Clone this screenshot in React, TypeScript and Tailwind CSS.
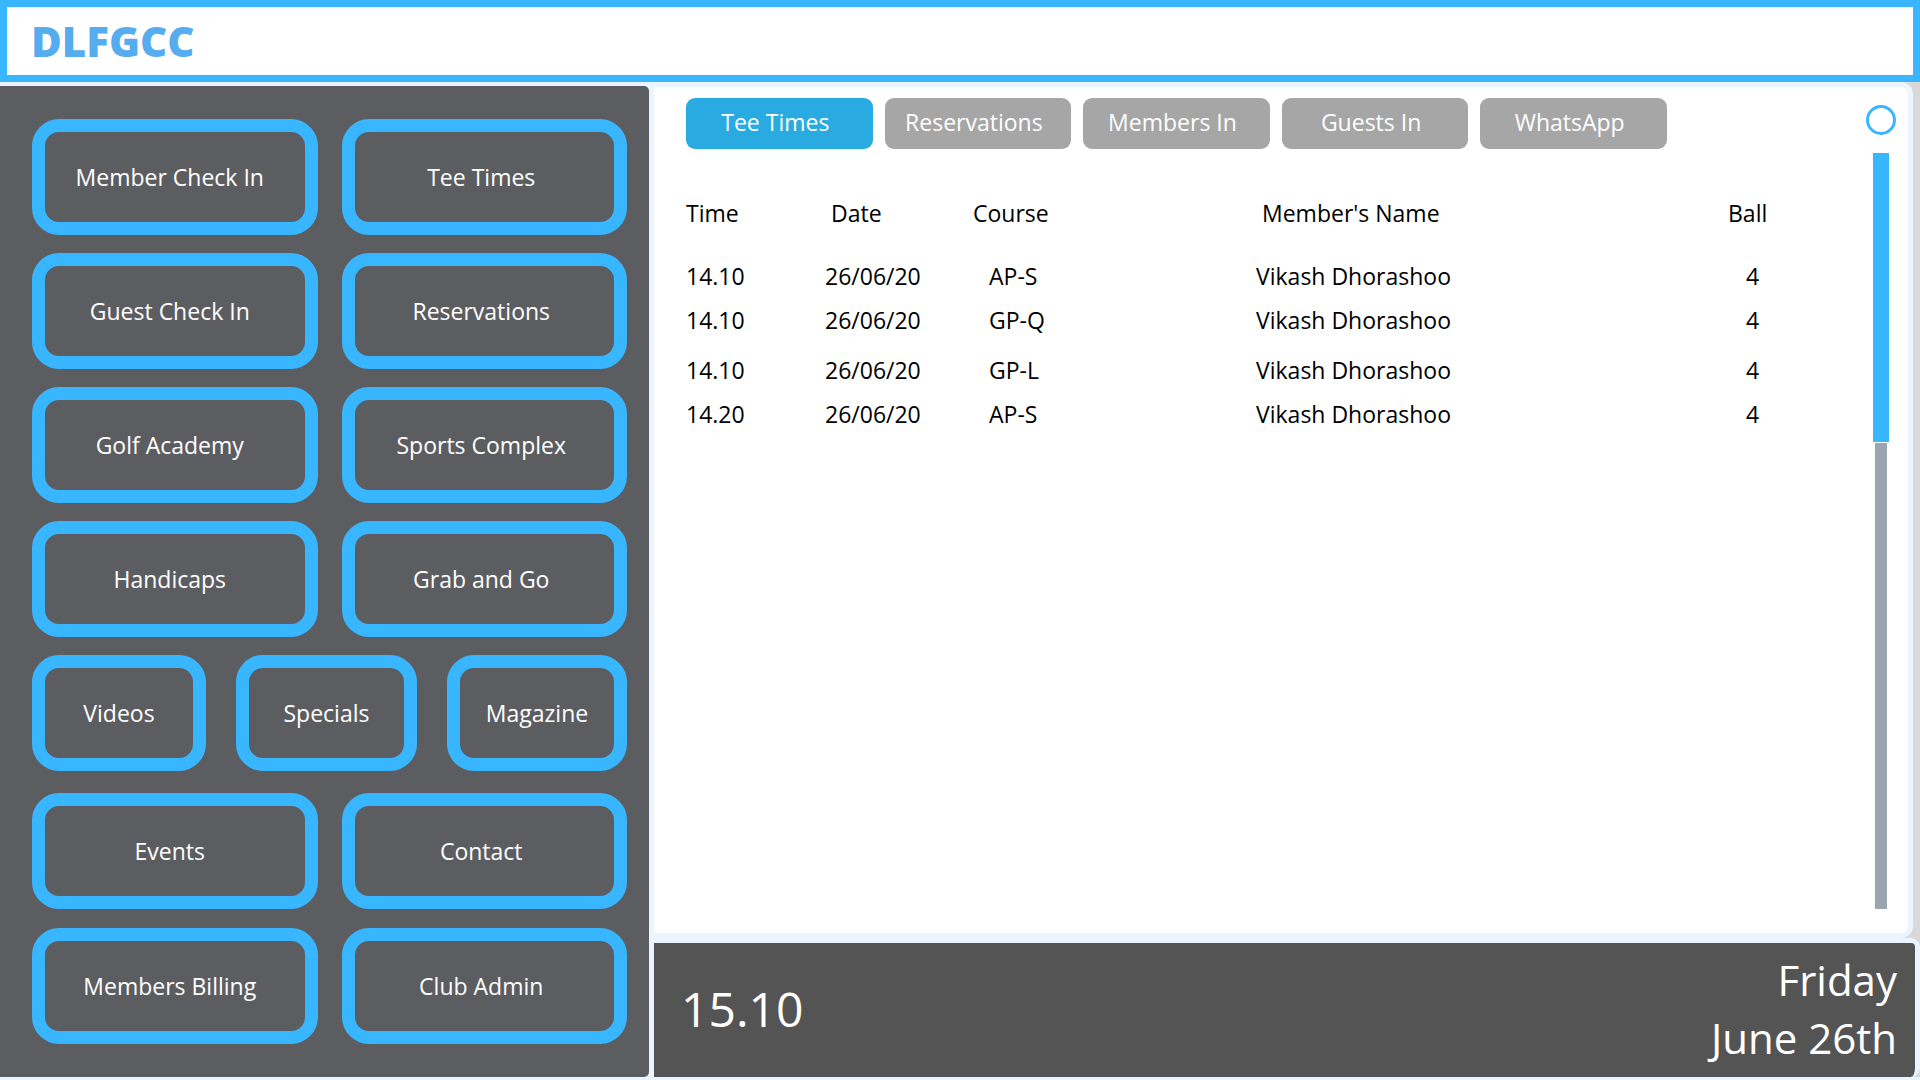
import { useState } from "react";

const menuTop = [
  ["Member Check In", "Tee Times"],
  ["Guest Check In", "Reservations"],
  ["Golf Academy", "Sports Complex"],
  ["Handicaps", "Grab and Go"],
];
const menuMiddle = ["Videos", "Specials", "Magazine"];
const menuBottom = [
  ["Events", "Contact"],
  ["Members Billing", "Club Admin"],
];
const tabs = ["Tee Times", "Reservations", "Members In", "Guests In", "WhatsApp"];
const bookings = [
  { time: "14.10", date: "26/06/20", course: "AP-S", member: "Vikash Dhorashoo", ball: 4 },
  { time: "14.10", date: "26/06/20", course: "GP-Q", member: "Vikash Dhorashoo", ball: 4 },
  { time: "14.10", date: "26/06/20", course: "GP-L", member: "Vikash Dhorashoo", ball: 4 },
  { time: "14.20", date: "26/06/20", course: "AP-S", member: "Vikash Dhorashoo", ball: 4 },
];

const tile =
  "h-[116px] rounded-[27px] border-[13px] border-[#38b6ff] text-center text-white whitespace-nowrap";

function MenuPair({ labels }: { labels: string[] }) {
  return (
    <div className="grid grid-cols-2 gap-6">
      <button className={`${tile} pr-2.5`}>{labels[0]}</button>
      <button className={`${tile} pr-1.5`}>{labels[1]}</button>
    </div>
  );
}

function Sidebar() {
  return (
    <nav
      aria-label="Main menu"
      className="flex flex-col gap-[22px] rounded-r-[5px] bg-[#5c5d61] pt-[33px] pr-[22px] pb-8 pl-8"
    >
      <div className="flex flex-col gap-[18px]">
        {menuTop.map((labels) => (
          <MenuPair key={labels[0]} labels={labels} />
        ))}
        <div className="grid grid-cols-[174fr_181fr_180fr] gap-[30px]">
          {menuMiddle.map((label) => (
            <button key={label} className={tile}>
              {label}
            </button>
          ))}
        </div>
      </div>
      <div className="flex flex-col gap-[19px]">
        {menuBottom.map((labels) => (
          <MenuPair key={labels[0]} labels={labels} />
        ))}
      </div>
    </nav>
  );
}

function BookingTable() {
  return (
    <table
      id="bookings"
      className="mt-[42px] w-full table-fixed text-left leading-[44px] text-black"
    >
      <colgroup>
        <col className="w-[139px]" />
        <col className="w-[148px]" />
        <col className="w-[283px]" />
        <col />
        <col className="w-[60px]" />
      </colgroup>
      <thead>
        <tr>
          <th className="pb-[13px] font-normal">Time</th>
          <th className="pb-[13px] pl-1.5 font-normal">Date</th>
          <th className="pb-[13px] font-normal">Course</th>
          <th className="pb-[13px] pl-1.5 font-normal">Member's Name</th>
          <th className="pb-[13px] font-normal">Ball</th>
        </tr>
      </thead>
      <tbody>
        {bookings.map((b, i) => (
          <tr key={i} className="h-[44px] align-bottom odd:h-[50px]">
            <td>{b.time}</td>
            <td>{b.date}</td>
            <td className="pl-4">{b.course}</td>
            <td>{b.member}</td>
            <td className="pl-[18px]">{b.ball}</td>
          </tr>
        ))}
      </tbody>
    </table>
  );
}

export default function App() {
  const [active, setActive] = useState("Tee Times");
  return (
    <div className="flex min-h-screen flex-col bg-[#ebf5ff] font-['Open_Sans',sans-serif] text-[23px]">
      <header className="flex h-[82px] items-center border-7 border-[#38b6ff] bg-white pb-0.5 pl-6">
        <h1 className="text-[42px] font-extrabold text-[#55acee]">DLFGCC</h1>
      </header>

      <div className="grid flex-1 grid-cols-[649fr_1266fr] gap-[5px] pt-1 pb-[3px]">
        <Sidebar />

        <div className="-mt-1 flex flex-col bg-[#d9d9d9]">
          <main className="mr-[7px] flex flex-1 rounded-r-xl border-t-5 border-r-5 border-b-5 border-[#ebf5ff] bg-white">
            <section className="flex-1 pt-[11px] pl-8">
              <div role="tablist" className="flex w-[981px] gap-3">
                {tabs.map((tab) => (
                  <button
                    key={tab}
                    role="tab"
                    aria-selected={active === tab}
                    onClick={() => setActive(tab)}
                    className={`h-[51px] flex-1 basis-0 rounded-[9px] pr-2 pb-0.5 text-center text-white ${
                      active === tab ? "bg-[#29abe2]" : "bg-[#a6a6a6]"
                    }`}
                  >
                    {tab}
                  </button>
                ))}
              </div>
              <BookingTable />
            </section>
            <div className="flex w-[120px] flex-col items-center pt-[18px] pb-6 pl-[66px]">
              <button
                aria-label="Refresh"
                className="size-[30px] rounded-full border-3 border-[#38b6ff] bg-white"
              />
              <div
                role="scrollbar"
                aria-controls="bookings"
                aria-valuenow={0}
                className="mt-[18px] flex flex-1 flex-col items-center gap-px"
              >
                <div className="w-4 flex-[289] bg-[#38b6ff]" />
                <div className="w-3 flex-[466] bg-[#9aa5b1]" />
              </div>
            </div>
          </main>

          <footer className="-ml-[5px] flex items-center justify-between rounded-r-[9px] border-t-5 border-r-5 border-l-5 border-[#ebf5ff] bg-[#545454] pt-2 pr-[18px] pb-2.5 pl-[27px] text-white">
            <time className="text-5xl">15.10</time>
            <p className="text-right text-[42px] leading-[58px]">
              Friday
              <br />
              June 26th
            </p>
          </footer>
        </div>
      </div>
    </div>
  );
}
